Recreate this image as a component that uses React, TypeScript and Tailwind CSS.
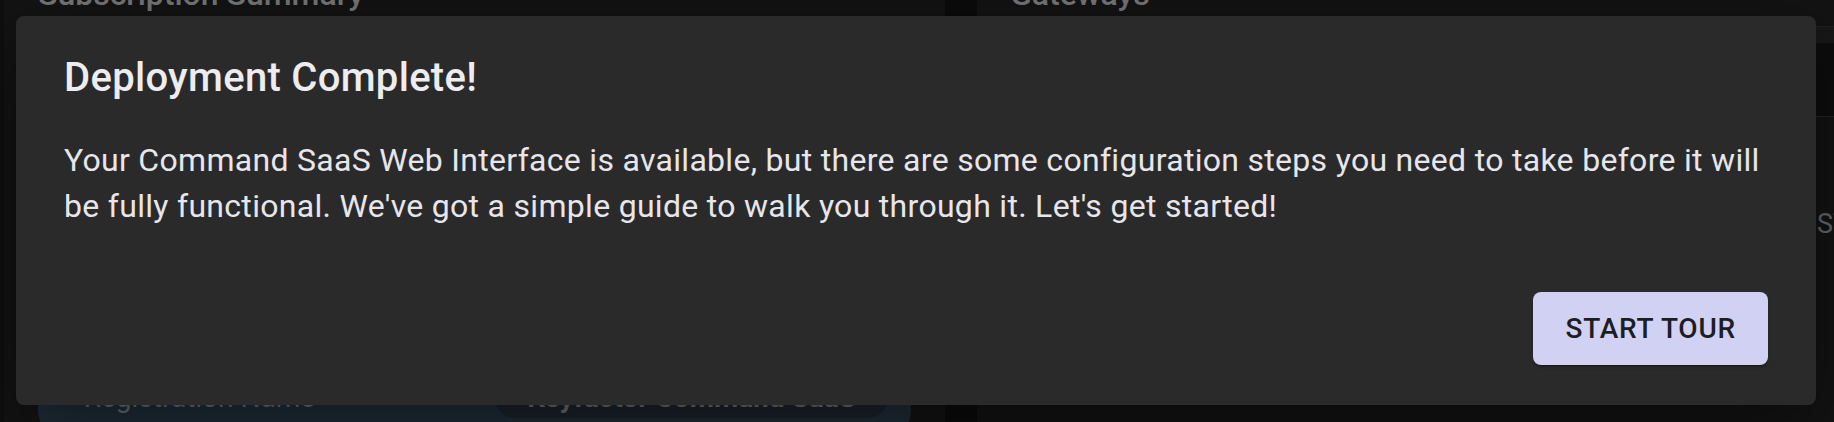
import React from 'react';

// Page behind the modal, already dimmed by the backdrop
const DimmedPage: React.FC = () => {
  return (
    <div className="flex h-full pl-1 bg-[#0f0f0f]">
      {/* Subscription Summary panel */}
      <section className="flex h-full w-[941px] shrink-0 flex-col bg-[#131313] px-[34px]">
        <h2 className="-mt-[30px] text-[32px] font-medium leading-[48px] text-[#767676]">
          Subscription Summary
        </h2>
        <div className="mt-auto -mb-[20px] rounded-[32px] bg-[#1f2d38] pl-[29px] pr-[23px] pb-[23px]">
          <div className="flex items-baseline justify-between">
            <div className="flex items-baseline gap-3 text-[28px] text-[#6a7077]">
              <span className="text-[14px]">•</span>
              <span>Registration Name</span>
            </div>
            <span className="rounded-[20px] bg-[#1a232b] px-8 pt-1 pb-[2px] text-[28px] font-bold leading-[36px] text-[#6b6e72]">
              Keyfactor Command SaaS
            </span>
          </div>
        </div>
      </section>

      <div className="w-8 shrink-0 bg-[#0b0b0b]" />

      {/* Gateways panel */}
      <section className="flex h-full min-w-0 flex-1 flex-col bg-[#131313]">
        <h2 className="-mt-[30px] pl-[33px] text-[32px] font-medium leading-[48px] text-[#767676]">
          Gateways
        </h2>
        <div className="mt-2 border-t border-[#1f1f1f]">
          <div className="h-[16px] bg-[#181818]" />
          <div className="h-[74px] border-b border-[#232323] bg-[#0d0d0d]" />
          <div className="grid grid-cols-[840px_1fr] pt-[91px] text-[27px] leading-[32px] text-[#666]">
            <span />
            <span>STATUS</span>
          </div>
        </div>
      </section>
    </div>
  );
};

export default function App() {
  return (
    <div className="relative h-[422px] w-full overflow-hidden font-['Roboto',sans-serif]">
      <DimmedPage />

      {/* Modal dialog */}
      <div
        role="dialog"
        className="absolute left-4 top-4 flex h-[389px] w-[1800px] flex-col rounded-lg bg-[#2a2a2a] px-12 pt-[38px] pb-10 shadow-[0_22px_70px_rgba(0,0,0,0.45)]"
      >
        <h1 className="text-[40px] font-medium leading-[48px] tracking-[0.3px] text-[#ececf1]">
          Deployment Complete!
        </h1>
        <p className="mt-[35px] text-[32px] leading-[46px] tracking-[0.3px] text-[#e6e6ec]">
          Your Command SaaS Web Interface is available, but there are some configuration steps you need to take before it will be fully functional. We've got a simple guide to walk you through it. Let's get started!
        </p>
        <div className="mt-auto flex justify-end">
          <button className="h-[73px] rounded-lg bg-[#d0d1f3] px-8 text-[28px] font-medium uppercase leading-[49px] tracking-[0.8px] text-[#1d1d24] shadow-[0_3px_2px_-2px_rgba(0,0,0,0.3),0_2px_3px_rgba(0,0,0,0.2)]">
            Start Tour
          </button>
        </div>
      </div>
    </div>
  );
}
